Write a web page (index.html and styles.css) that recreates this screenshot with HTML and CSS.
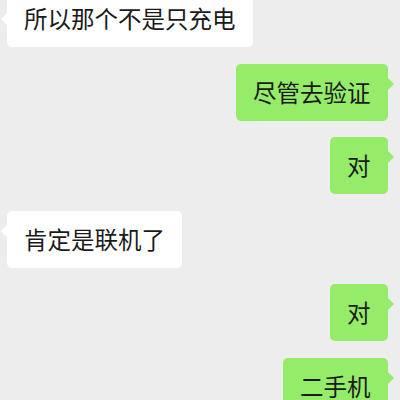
FILE: index.html
```html
<!DOCTYPE html>
<html lang="zh-CN">
<head>
<meta charset="utf-8">
<title>聊天</title>
<link rel="stylesheet" href="styles.css">
</head>
<body>
<div class="chat">
  <div class="bubble left tail-low">所以那个不是只充电</div>
  <div class="bubble right">尽管去验证</div>
  <div class="bubble right">对</div>
  <div class="bubble left">肯定是联机了</div>
  <div class="bubble right">对</div>
  <div class="bubble right">二手机</div>
</div>
</body>
</html>
```
FILE: styles.css
```css
html, body {
  margin: 0;
  padding: 0;
  background: #ededed;
  height: 400px;
  overflow: hidden;
}
.chat {
  display: flex;
  flex-direction: column;
  gap: 16.6px;
  margin-top: -10px;
  padding: 0 12.5px 0 7px;
  font-family: "Noto Sans CJK SC", "Noto Sans", sans-serif;
  font-size: 23.5px;
  color: #1a1a1a;
}
.bubble {
  position: relative;
  padding: 14px 17px;
  line-height: 29px;
  height: 29px;
  border-radius: 5px;
  white-space: nowrap;
}
.bubble.left {
  align-self: flex-start;
  background: #ffffff;
}
.bubble.right {
  align-self: flex-end;
  background: #95ec69;
}
.bubble::after {
  content: "";
  position: absolute;
  top: 13px;
  width: 0;
  height: 0;
  border-top: 7px solid transparent;
  border-bottom: 7px solid transparent;
}
.bubble.left::after {
  left: -6px;
  border-right: 7px solid #ffffff;
}
.bubble.right::after {
  right: -6px;
  border-left: 7px solid #95ec69;
}
.bubble.tail-low::after {
  top: 22px;
}
```
